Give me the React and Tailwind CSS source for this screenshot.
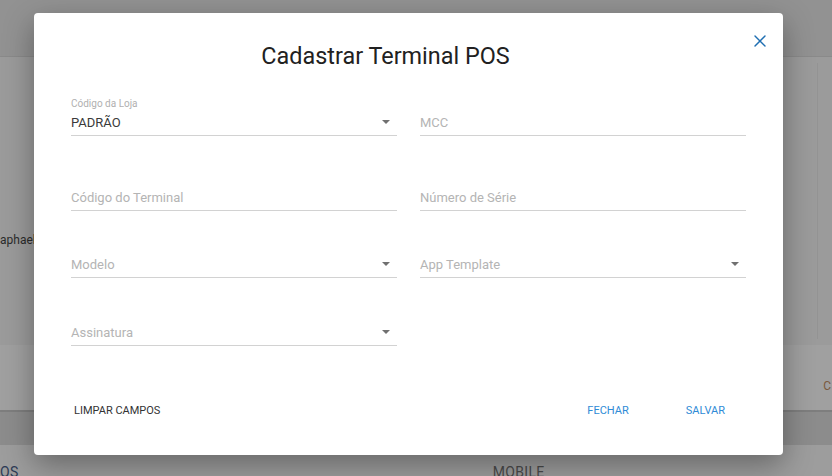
import { X } from "lucide-react";

function Arrow() {
  return (
    <svg width="8" height="4" viewBox="0 0 8 4" className="mb-[9px] mr-[7px] shrink-0">
      <path d="M0 0 L8 0 L4 4 Z" fill="#707070" />
    </svg>
  );
}

function Field({ label, value, placeholder, select }) {
  return (
    <div className="flex flex-col">
      {label && <div className="text-[10px] leading-[12px] text-[#b0b0b0] mb-[3px]">{label}</div>}
      <div className="flex items-end justify-between border-b border-[#d2d2d2] pb-[2px]">
        {value ? (
          <span className="text-[13px] leading-[20px] text-[#3a3a3a]">{value}</span>
        ) : (
          <span className="text-[13px] leading-[20px] text-[#b4b4b4]">{placeholder}</span>
        )}
        {select && <Arrow />}
      </div>
    </div>
  );
}

function App() {
  return (
    <div className="relative w-[832px] h-[476px] overflow-hidden bg-[#9b9b9b] font-['Roboto',sans-serif]">
      {/* page behind the dialog */}
      <div className="h-[57px] bg-[#929292] border-b border-[#8a8a8a]"></div>
      <div className="flex h-[288px]">
        <div className="flex-1 flex flex-col justify-center">
          <div className="text-[12px] text-[#2b2b2b] mt-[78px]">aphael</div>
        </div>
        <div className="w-px my-[6px] bg-[#939393] mr-[14px]"></div>
      </div>
      <div className="h-[65px] bg-[#a0a0a0] flex items-center justify-end">
        <span className="text-[12px] text-[#7a5a3e] mr-[1px] mt-[16px]">C</span>
      </div>
      <div className="h-[35px] bg-[#8c8c8c] border-t-2 border-[#7e7e7e]"></div>
      <div className="flex h-[31px] bg-[#9d9d9d] items-end text-[14px] tracking-wide">
        <span className="text-[#2c3a55] leading-[14px] mb-[-3px]">OS</span>
        <span className="ml-[474px] text-[#4a4a4a] leading-[14px] mb-[-3px]">MOBILE</span>
      </div>

      {/* dialog */}
      <div className="absolute left-[34px] top-[13px] w-[749px] h-[442px] bg-white rounded-[4px] shadow-[0_10px_30px_rgba(0,0,0,0.35)] pt-[27px]">
        <button className="absolute right-[13px] top-[18px] text-[#1f6fb2]">
          <X size={20} strokeWidth={1.7} />
        </button>
        <h1 className="text-center text-[23.4px] leading-[32px] text-[#212121] pr-[46px]">Cadastrar Terminal POS</h1>

        <div className="px-[37px]">
          <div className="grid grid-cols-2 gap-x-[23px] h-[64px] items-end">
            <Field label="Código da Loja" value="PADRÃO" select />
            <Field placeholder="MCC" />
          </div>
          <div className="grid grid-cols-2 gap-x-[23px] h-[75px] items-end">
            <Field placeholder="Código do Terminal" />
            <Field placeholder="Número de Série" />
          </div>
          <div className="grid grid-cols-2 gap-x-[23px] h-[67px] items-end">
            <Field placeholder="Modelo" select />
            <Field placeholder="App Template" select />
          </div>
          <div className="grid grid-cols-2 gap-x-[23px] h-[68px] items-end">
            <Field placeholder="Assinatura" select />
            <div></div>
          </div>
        </div>

        <div className="mt-[47px] h-[36px] flex items-center justify-between pl-[40px] pr-[58px] text-[11px]">
          <button className="text-[#333]">LIMPAR CAMPOS</button>
          <div className="flex items-center gap-[57px]">
            <button className="text-[#2f8bd6]">FECHAR</button>
            <button className="text-[#2f8bd6]">SALVAR</button>
          </div>
        </div>
      </div>
    </div>
  );
}

export default App;
